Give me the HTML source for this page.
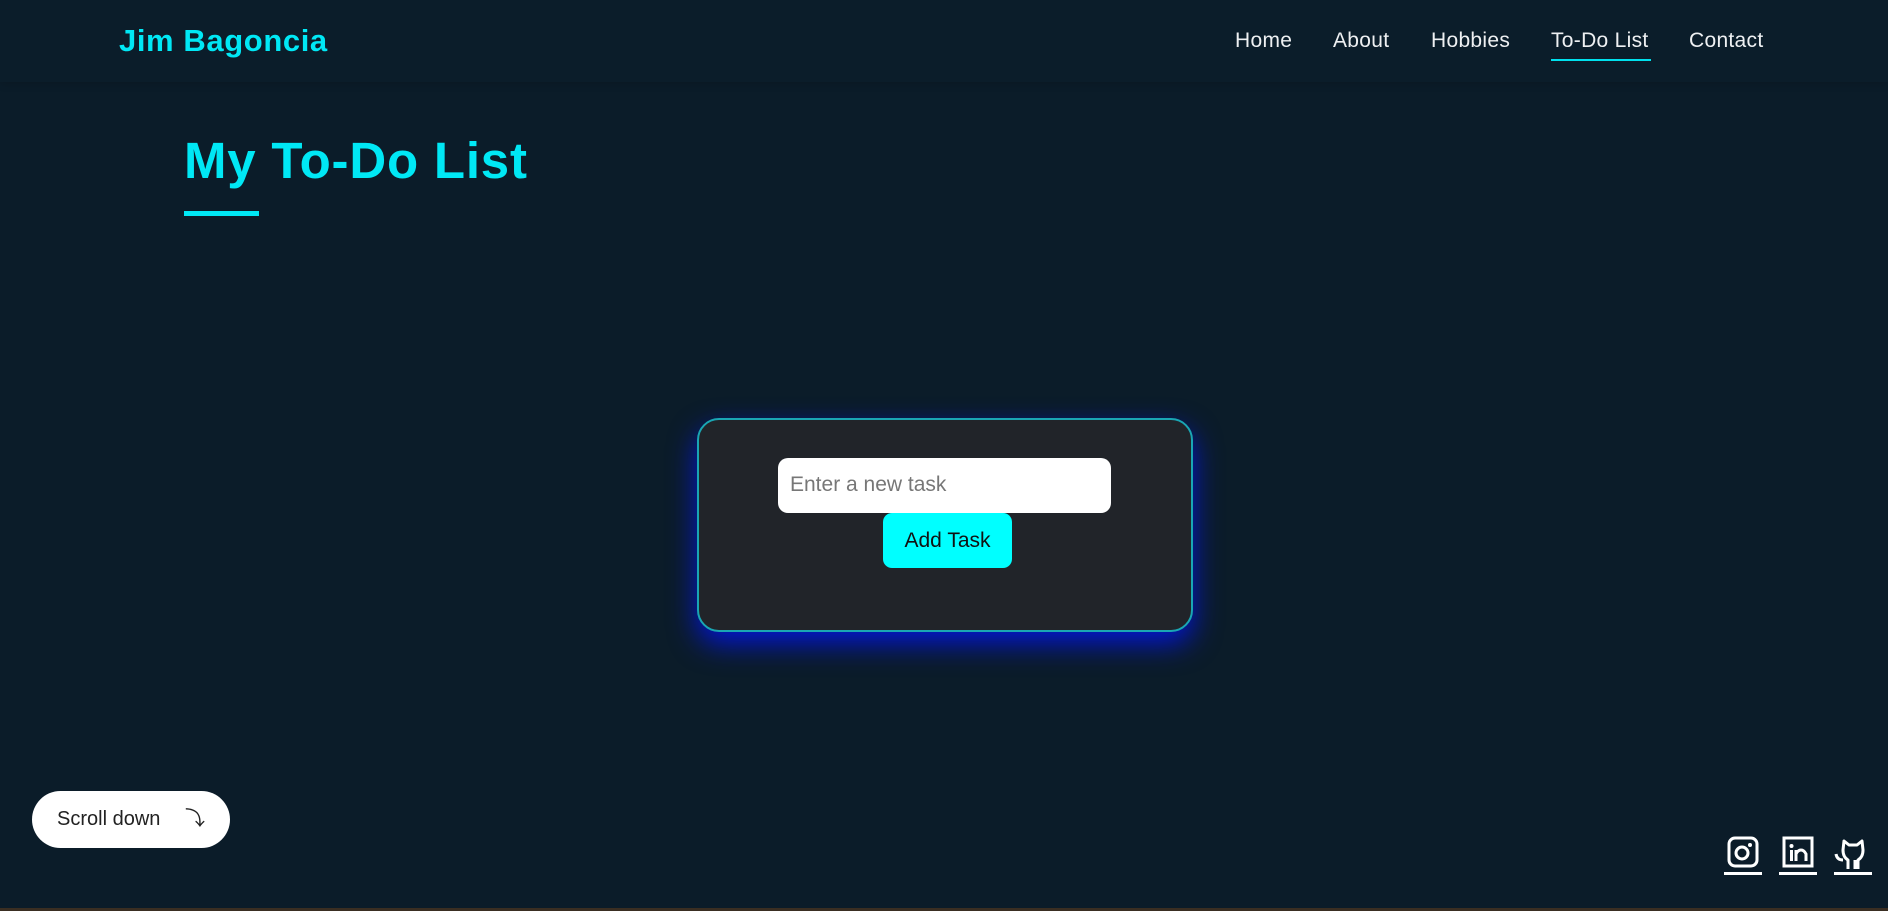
<!DOCTYPE html>
<html><head><meta charset="utf-8"><style>
*{margin:0;padding:0;box-sizing:border-box}
html,body{width:1888px;height:911px;overflow:hidden;background:#0b1c29;font-family:"Liberation Sans",sans-serif}
.hdr{position:absolute;left:0;top:0;width:1888px;height:82px;background:#0b1d2a;box-shadow:0 2px 8px rgba(0,0,0,.15)}
.logo{position:absolute;left:119px;top:23px;font-size:31px;font-weight:bold;color:#00e8f5;letter-spacing:0.6px}
.nav a{position:absolute;top:29px;font-size:21px;color:#eef0f2;text-decoration:none;white-space:nowrap;letter-spacing:0.3px}
.ul{position:absolute;left:1551px;top:59px;width:100px;height:2px;background:#00e1ee}
h1{position:absolute;left:184px;top:131px;font-size:51px;font-weight:bold;color:#00e8f5;letter-spacing:0.8px;white-space:nowrap}
.tl{position:absolute;left:184px;top:211px;width:75px;height:5px;background:#00e8f5}
.card{position:absolute;left:697px;top:418px;width:496px;height:214px;background:#212429;border:2px solid #1aa6b3;border-radius:22px;box-shadow:0 12px 28px rgba(0,20,240,.85)}
.inp{position:absolute;left:778px;top:458px;width:333px;height:55px;background:#fff;border-radius:10px;color:#777;font-size:21px;padding:15px 0 0 12px}
.btn{position:absolute;left:883px;top:513px;width:129px;height:55px;background:#00ffff;border-radius:9px;color:#111;font-size:21px;text-align:center;line-height:55px}
.sd{position:absolute;left:32px;top:791px;width:198px;height:57px;background:#fff;border-radius:29px;font-size:20px;color:#222;line-height:57px;padding-left:25px}
.sd span{position:absolute;left:153px;top:0;font-size:20px}
.ic{position:absolute;top:836px;width:38px}
.ic .b{position:absolute;left:0;top:36px;width:38px;height:3px;background:#fff}
.bl{position:absolute;left:0;top:908px;width:1888px;height:3px;background:#3a2e22}
</style></head><body>
<div class="hdr">
<div class="logo">Jim Bagoncia</div>
<div class="nav">
<a style="left:1235px">Home</a>
<a style="left:1333px">About</a>
<a style="left:1431px">Hobbies</a>
<a style="left:1551px">To-Do List</a>
<a style="left:1689px">Contact</a>
</div>
<div class="ul"></div>
</div>
<h1>My To-Do List</h1>
<div class="tl"></div>
<div class="card"></div>
<div class="inp">Enter a new task</div>
<div class="btn">Add Task</div>
<div class="sd">Scroll down<span>⤵</span></div>
<div class="ic" style="left:1724px"><svg width="38" height="34" viewBox="0 0 38 34"><rect x="5" y="2" width="28" height="28" rx="6" fill="none" stroke="#fff" stroke-width="3"/><circle cx="18" cy="17" r="6" fill="none" stroke="#fff" stroke-width="3"/><circle cx="26" cy="9" r="2" fill="#fff"/></svg><div class="b"></div></div>
<div class="ic" style="left:1779px"><svg width="38" height="34" viewBox="0 0 38 34"><rect x="5" y="2" width="28" height="28" fill="none" stroke="#fff" stroke-width="3"/><rect x="11" y="14" width="3" height="11" fill="#fff"/><circle cx="12.5" cy="10" r="2" fill="#fff"/><path d="M17 25V14M17 18q2-4 5-4t5 4v7" fill="none" stroke="#fff" stroke-width="3"/></svg><div class="b"></div></div>
<div class="ic" style="left:1834px"><svg width="38" height="34" viewBox="0 0 38 34"><path d="M14 33V24q-5-3-5-10l1-9 5 4h8l5-4 1 9q0 7-5 10v9M21 24v9M2 18q1 6 7 6" fill="none" stroke="#fff" stroke-width="3" stroke-linejoin="round"/></svg><div class="b"></div></div>
<div class="bl"></div>
</body></html>
